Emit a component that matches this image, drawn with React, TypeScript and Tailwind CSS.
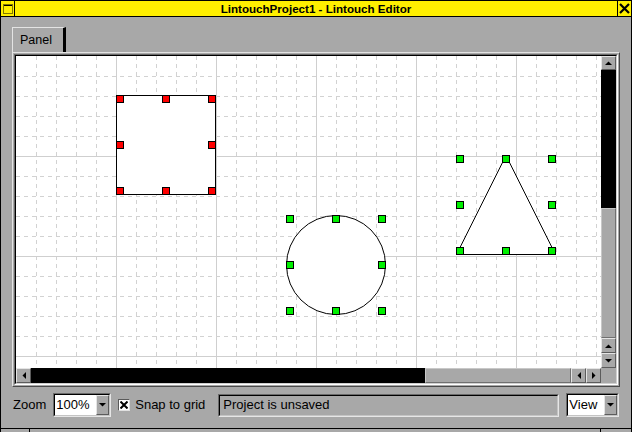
import React from 'react';

const font = { fontFamily: '"Liberation Sans", Arial, sans-serif' };

type Dir = 'up' | 'down' | 'left' | 'right';

const Arrow = ({ dir }: { dir: Dir }) => {
  const pts: Record<Dir, string> = {
    up: '0,4 7,4 3.5,0.5',
    down: '0,0 7,0 3.5,3.5',
    left: '4,0 4,7 0.5,3.5',
    right: '0,0 0,7 3.5,3.5',
  };
  const vertical = dir === 'up' || dir === 'down';
  return (
    <svg width={vertical ? 7 : 4} height={vertical ? 4 : 7} className="block">
      <polygon points={pts[dir]} fill="#000" />
    </svg>
  );
};

const ScrollButton = ({ dir, className }: { dir: Dir; className: string }) => (
  <div
    className={`shrink-0 flex items-center justify-center bg-[#a8a8a8] border border-t-[#e4e4e4] border-l-[#e4e4e4] border-r-[#5c5c5c] border-b-[#5c5c5c] ${className}`}
  >
    <Arrow dir={dir} />
  </div>
);

// sunken two-tone frame used by the combo boxes and the status field
const Sunken = ({ className, children }: { className: string; children: React.ReactNode }) => (
  <div className={`shrink-0 border border-t-[#6a6a6a] border-l-[#6a6a6a] border-r-[#e6e6e6] border-b-[#e6e6e6] ${className}`}>
    <div className="h-full flex border border-t-black border-l-black border-r-[#c4c4c4] border-b-[#c4c4c4]">
      {children}
    </div>
  </div>
);

const Combo = ({ label, className, fieldWidth }: { label: string; className: string; fieldWidth: string }) => (
  <Sunken className={className}>
    <div className={`${fieldWidth} shrink-0 bg-white flex items-center pl-[1px] text-[13px] text-black`}>{label}</div>
    <div className="flex-1 flex items-center justify-center bg-[#a8a8a8] border border-t-[#e4e4e4] border-l-[#e4e4e4] border-r-[#5c5c5c] border-b-[#5c5c5c]">
      <Arrow dir="down" />
    </div>
  </Sunken>
);

const Handle = ({ x, y, fill }: { x: number; y: number; fill: string }) => (
  <rect x={x + 0.5} y={y + 0.5} width={7} height={7} fill={fill} stroke="#000" strokeWidth={1} />
);

const Canvas = () => {
  const W = 585;
  const H = 312;
  const xs = Array.from({ length: Math.floor(W / 20) }, (_, i) => (i + 1) * 20);
  const ys = Array.from({ length: Math.floor(H / 20) }, (_, i) => (i + 1) * 20);
  const hx = (a: number[], b: number[]) =>
    [
      [a[0], b[0]], [a[1], b[0]], [a[2], b[0]],
      [a[0], b[1]], [a[2], b[1]],
      [a[0], b[2]], [a[1], b[2]], [a[2], b[2]],
    ];
  return (
    <svg width={W} height={H} className="block bg-white shrink-0">
      {xs.map((x) => (
        <line
          key={'x' + x}
          x1={x + 0.5}
          y1={0}
          x2={x + 0.5}
          y2={H}
          stroke={x % 100 === 0 ? '#cfcfcf' : '#d2d2d2'}
          strokeDasharray={x % 100 === 0 ? undefined : '4 4'}
        />
      ))}
      {ys.map((y) => (
        <line
          key={'y' + y}
          x1={0}
          y1={y + 0.5}
          x2={W}
          y2={y + 0.5}
          stroke={y % 100 === 0 ? '#cfcfcf' : '#d2d2d2'}
          strokeDasharray={y % 100 === 0 ? undefined : '4 4'}
        />
      ))}

      {/* square */}
      <rect x={100.5} y={39.5} width={99} height={99} fill="#fff" stroke="#000" />
      {/* circle */}
      <circle cx={320} cy={209} r={49.5} fill="#fff" stroke="#000" />
      {/* triangle */}
      <polygon points="490,99.5 440.5,198.5 539.5,198.5" fill="#fff" stroke="#000" />

      {hx([100, 146, 192], [39, 85, 131]).map(([x, y]) => (
        <Handle key={`r${x}-${y}`} x={x} y={y} fill="#ff0000" />
      ))}
      {hx([270, 316, 362], [159, 205, 251]).map(([x, y]) => (
        <Handle key={`c${x}-${y}`} x={x} y={y} fill="#00f000" />
      ))}
      {hx([440, 486, 532], [99, 145, 191]).map(([x, y]) => (
        <Handle key={`t${x}-${y}`} x={x} y={y} fill="#00f000" />
      ))}
    </svg>
  );
};

export default function App() {
  return (
    <div
      className="w-[632px] h-[432px] bg-[#a8a8a8] border-x border-black flex flex-col overflow-hidden select-none"
      style={font}
    >
      {/* Title bar */}
      <div className="h-[17px] shrink-0 flex bg-[#ffef00] border-y border-black">
        <div className="w-[14px] border-r border-black flex items-center justify-center">
          <svg width="10" height="10" className="block">
            <rect x="0.5" y="0.5" width="9" height="9" fill="none" stroke="#000" strokeDasharray="1 1" />
            <line x1="1" y1="1.5" x2="9" y2="1.5" stroke="#000" />
          </svg>
        </div>
        <div className="flex-1 flex items-center justify-center text-[11.6px] font-bold text-black leading-none whitespace-nowrap">
          LintouchProject1 - Lintouch Editor
        </div>
        <div className="w-[14px] border-l border-black flex items-center justify-center">
          <svg width="11" height="11" className="block">
            <path d="M1 1 L10 10 M10 1 L1 10" stroke="#000" strokeWidth="2.2" />
          </svg>
        </div>
      </div>

      {/* Main area */}
      <div className="flex-1 flex flex-col pl-[11px] pr-[11px] pt-[10px]">
        {/* Tab */}
        <div className="h-[25px] shrink-0 flex">
          <div className="w-[54px] border-l border-t border-[#e4e4e4] border-r-[3px] border-r-black flex items-center pl-[7px] pt-[1px] text-[12.5px] text-black">
            Panel
          </div>
        </div>

        {/* Panel frame */}
        <div className="h-[335px] shrink-0 border border-t-[#e4e4e4] border-l-[#e4e4e4] border-r-[#4a4a4a] border-b-[#4a4a4a] p-[1px]">
          <div className="border border-t-[#6a6a6a] border-l-[#6a6a6a] border-r-white border-b-white">
            <div className="border border-t-black border-l-black border-r-[#d0d0d0] border-b-[#d0d0d0]">
              <div className="flex">
                <Canvas />
                {/* vertical scrollbar */}
                <div className="w-[15px] h-[312px] flex flex-col">
                  <ScrollButton dir="up" className="h-[14px]" />
                  <div className="h-[138px] shrink-0 bg-black" />
                  <div className="flex-1 border border-t-[#c8c8c8] border-l-[#c8c8c8] border-r-[#707070] border-b-[#707070]" />
                  <ScrollButton dir="up" className="h-[15px]" />
                  <ScrollButton dir="down" className="h-[15px]" />
                </div>
              </div>
              <div className="flex h-[15px]">
                {/* horizontal scrollbar */}
                <div className="w-[585px] flex">
                  <ScrollButton dir="left" className="w-[15px]" />
                  <div className="w-[394px] shrink-0 bg-black" />
                  <div className="flex-1 border border-t-[#c8c8c8] border-l-[#c8c8c8] border-r-[#707070] border-b-[#707070]" />
                  <ScrollButton dir="left" className="w-[15px]" />
                  <ScrollButton dir="right" className="w-[15px]" />
                </div>
                <div className="w-[15px]" />
              </div>
            </div>
          </div>
        </div>

        {/* Toolbar */}
        <div className="mt-[6px] h-[24px] shrink-0 flex items-center text-[13px] text-black whitespace-nowrap">
          <span className="ml-[1px] shrink-0">Zoom</span>
          <Combo label="100%" className="ml-[7px] w-[58px] h-[24px]" fieldWidth="w-[41px]" />
          <div className="ml-[7px] shrink-0 w-[12px] h-[12px] border border-t-[#5a5a5a] border-l-[#5a5a5a] border-r-[#e0e0e0] border-b-[#e0e0e0] bg-white flex items-center justify-center">
            <svg width="8" height="8" className="block">
              <path d="M0.5 0.5 L7.5 7.5 M7.5 0.5 L0.5 7.5" stroke="#000" strokeWidth="2" />
            </svg>
          </div>
          <span className="ml-[5px] shrink-0">Snap to grid</span>
          <Sunken className="ml-[13px] w-[341px] h-[23px]">
            <div className="flex-1 flex items-center pl-[3px] bg-[#a8a8a8]">Project is unsaved</div>
          </Sunken>
          <Combo label="View" className="ml-[7px] w-[53px] h-[24px]" fieldWidth="w-[36px]" />
        </div>
      </div>

      {/* Bottom window frame */}
      <div className="h-[4px] shrink-0 border-t border-black flex">
        <div className="w-[29px] border-r border-black" />
        <div className="flex-1" />
        <div className="w-[31px] border-l border-black" />
      </div>
    </div>
  );
}
